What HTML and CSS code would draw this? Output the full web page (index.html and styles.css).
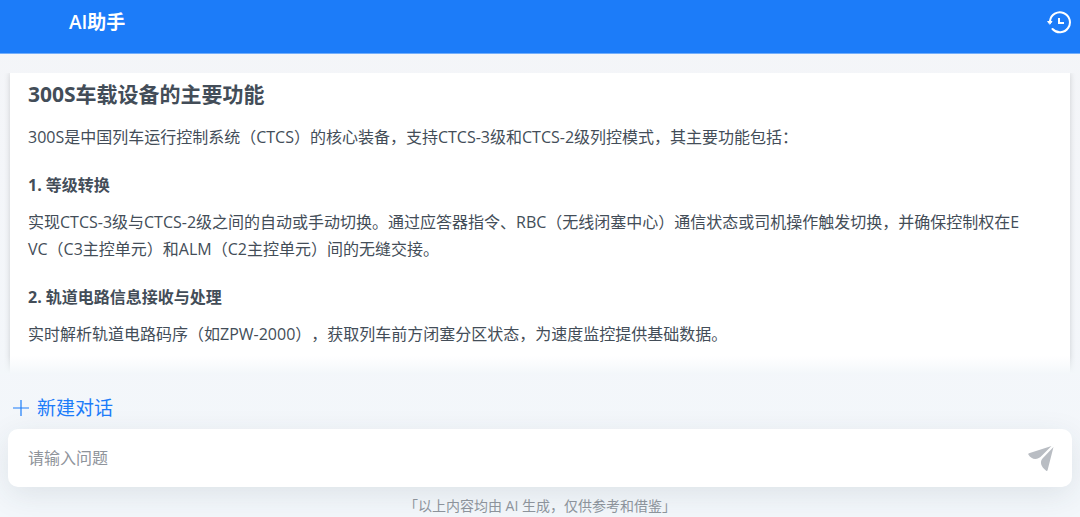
FILE: index.html
```
<!DOCTYPE html>
<html lang="zh-CN">
<head>
    <meta charset="UTF-8">
    <meta name="viewport" content="width=device-width, initial-scale=1.0">
    <title>AI助手</title>
    <link rel="stylesheet" href="styles.css">
</head>
<body>
    <header class="header">
        <h1 class="header-title">AI助手</h1>
        <button class="icon-button" type="button" aria-label="历史记录">
            <svg width="24" height="24" viewBox="0 0 24 24" fill="none" stroke="#fff" stroke-width="2" stroke-linecap="round" stroke-linejoin="round">
                <path d="M3 11A10 10 0 1 1 5.500 19"/>
                <path d="M1 11.500h4L3 14z" fill="#fff" stroke-width="1"/>
                <path d="M12 8v5h5" stroke-linecap="butt" stroke-linejoin="miter"/>
            </svg>
        </button>
    </header>

    <main class="chat">
        <article class="message">
            <h2>300S车载设备的主要功能</h2>
            <p>300S是中国列车运行控制系统（CTCS）的核心装备，支持CTCS-3级和CTCS-2级列控模式，其主要功能包括：</p>
            <h3>1. 等级转换</h3>
            <p>实现CTCS-3级与CTCS-2级之间的自动或手动切换。通过应答器指令、RBC（无线闭塞中心）通信状态或司机操作触发切换，并确保控制权在EVC（C3主控单元）和ALM（C2主控单元）间的无缝交接。</p>
            <h3>2. 轨道电路信息接收与处理</h3>
            <p>实时解析轨道电路码序（如ZPW-2000），获取列车前方闭塞分区状态，为速度监控提供基础数据。</p>
        </article>
    </main>

    <footer class="footer">
        <button class="new-chat" type="button">
            <svg width="16" height="16" viewBox="0 0 16 16" fill="none" stroke="currentColor" stroke-width="1.200">
                <path d="M8 0v16M0 8h16"/>
            </svg>
            新建对话
        </button>
        <form class="ask-form">
            <input class="ask-input" type="text" placeholder="请输入问题" aria-label="请输入问题">
            <button class="icon-button" type="submit" aria-label="发送">
                <svg width="26" height="26" viewBox="0 0 26 26" fill="#b9bdc3">
                    <path d="M0.300 9.500Q0 8.500 1 8.200L23.500 1L14 10.500C10 15 4 15.500 0.300 9.500z"/>
                    <path d="M25.500 2L19.500 25.500C19.200 26 18.600 26 18.200 25.700C12.500 21.500 11.800 16.500 14.500 13.500z"/>
                </svg>
            </button>
        </form>
        <p class="notice">「以上内容均由 AI 生成，仅供参考和借鉴」</p>
    </footer>
</body>
</html>
```

FILE: styles.css
```
* {
    box-sizing: border-box;
}
body {
    display: flex;
    flex-direction: column;
    height: 100vh;
    margin: 0;
    overflow: hidden;
    font-family: "Open Sans", "Noto Sans CJK SC", sans-serif;
    font-size: 16px;
    text-spacing-trim: space-all;
    color: #434d58;
    background: linear-gradient(#f4f5f8, #f3f7fb);
}
button {
    padding: 0;
    border: none;
    background: none;
    font-family: inherit;
    cursor: pointer;
}
.header {
    display: flex;
    justify-content: space-between;
    align-items: flex-start;
    padding: 8px 9px 17px 69px;
    border-bottom: 1px solid #73aefb;
    background-color: #1c7cf9;
    color: #fff;
}
.header-title {
    margin: 0;
    font-size: 19px;
    font-weight: 600;
    line-height: 28px;
}
.icon-button {
    display: flex;
    padding: 2px 0;
}
.chat {
    position: relative;
    flex: 1;
    min-height: 0;
    margin-top: 19px;
    padding: 0 10px;
    overflow: hidden;
}
/* fades the message out above the footer */
.chat::after {
    content: "";
    position: absolute;
    left: 0;
    right: 0;
    bottom: 0;
    height: 18px;
    background: linear-gradient(rgba(243, 247, 250, 0), #f3f7fa);
}
.message {
    min-height: 100%;
    padding: 8px 44px 8px 18px;
    background-color: #fff;
    box-shadow: 0 0 6px rgba(0, 0, 0, 0.16);
}
.message h2 {
    margin: 0 0 16px;
    font-size: 21px;
    line-height: 27px;
}
.message h3 {
    margin: 20px 0 10px;
    font-size: 16px;
    line-height: 28px;
}
.message p {
    margin: 0;
    line-height: 27px;
    word-break: break-all;
}
.footer {
    padding: 20px 8px 0;
}
.new-chat {
    display: flex;
    align-items: center;
    gap: 8px;
    margin-left: 5px;
    color: #1c7cf9;
    font-size: 19px;
    line-height: 28px;
}
.ask-form {
    display: flex;
    align-items: center;
    margin-top: 7px;
    padding: 14px 18px 14px 20px;
    border-radius: 10px;
    background-color: #fff;
    box-shadow: 0 8px 30px rgba(40, 60, 70, 0.1);
}
.ask-input {
    flex: 1;
    min-width: 0;
    padding: 0;
    border: none;
    outline: none;
    background: none;
    font-family: inherit;
    font-size: 16px;
    line-height: 30px;
}
.ask-input::placeholder {
    color: #8f949b;
}
.notice {
    margin: 8px 0 0;
    color: #8c939b;
    font-size: 14px;
    line-height: 22px;
    text-align: center;
}
```
